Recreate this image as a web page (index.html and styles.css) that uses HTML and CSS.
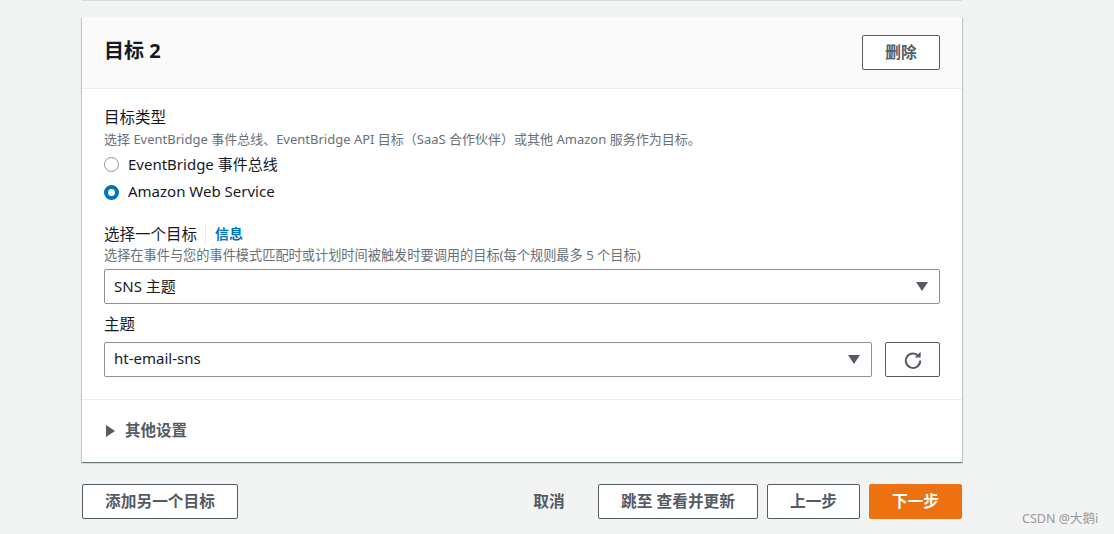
FILE: index.html
```html
<!DOCTYPE html>
<html lang="zh-CN">

<head>
    <meta charset="UTF-8">
    <meta name="viewport" content="width=device-width, initial-scale=1.0">
    <title>目标 2</title>
    <link rel="stylesheet" href="styles.css">
</head>

<body>
    <main class="side">
        <div class="forrige"></div>

        <section class="kort">
            <header class="kort-top">
                <h2>目标 2</h2>
                <button class="knap slet">删除</button>
            </header>

            <div class="kort-indhold">
                <div class="felt-titel">目标类型</div>
                <p class="hint hint-top">选择 EventBridge 事件总线、EventBridge API 目标（SaaS 合作伙伴）或其他 Amazon 服务作为目标。</p>

                <div class="radio-linje">
                    <span class="radio"></span>
                    <span class="radio-tekst">EventBridge 事件总线</span>
                </div>
                <div class="radio-linje">
                    <span class="radio valgt"></span>
                    <span class="radio-tekst">Amazon Web Service</span>
                </div>

                <div class="felt-titel med-info">
                    <span>选择一个目标</span>
                    <a class="info" href="#">信息</a>
                </div>
                <p class="hint hint-luft">选择在事件与您的事件模式匹配时或计划时间被触发时要调用的目标(每个规则最多 5 个目标)</p>
                <div class="vaelger">
                    <span>SNS 主题</span>
                    <span class="pil"></span>
                </div>

                <div class="felt-titel tema">主题</div>
                <div class="raekke">
                    <div class="vaelger">
                        <span>ht-email-sns</span>
                        <span class="pil"></span>
                    </div>
                    <button class="knap opdater" aria-label="刷新">
                        <svg width="18" height="18" viewBox="0 0 18 18" fill="none">
                            <path d="M14.6 5.2A7.2 7.2 0 1 0 16.2 9.6" stroke="#545b64" stroke-width="2"/>
                            <path d="M10.6 6.6H16.6V0.8Z" fill="#545b64"/>
                        </svg>
                    </button>
                </div>
            </div>

            <div class="kort-bund">
                <span class="trekant"></span>
                <span>其他设置</span>
            </div>
        </section>

        <footer class="handlinger">
            <button class="knap tilfoej">添加另一个目标</button>
            <div class="hoejre">
                <button class="knap flad">取消</button>
                <button class="knap spring">跳至 查看并更新</button>
                <button class="knap forrige-trin">上一步</button>
                <button class="knap naeste">下一步</button>
            </div>
        </footer>
    </main>

    <div class="vandmaerke">CSDN @大鹅i</div>
</body>

</html>
```

FILE: styles.css
```css
html {
    height: 100%;
}

body {
    margin: 0;
    height: 534px;
    overflow: hidden;
    background-color: #f2f3f3;
    color: #16191f;
    font-family: "Noto Sans", "Noto Sans CJK SC", sans-serif;
    font-size: 15px;
}

.side {
    width: 880px;
    margin-left: 82px;
}

.forrige {
    height: 1px;
    background-color: #d5dbdb;
    margin-bottom: 16px;
}

.kort {
    background-color: #fff;
    box-shadow: 0 1px 1px 0 rgba(0, 28, 36, 0.4), 1px 1px 1px 0 rgba(0, 28, 36, 0.15), -1px 1px 1px 0 rgba(0, 28, 36, 0.15);
}

.kort-top {
    display: flex;
    justify-content: space-between;
    align-items: center;
    height: 71px;
    padding: 0 22px;
    background-color: #fafafa;
    border-bottom: 1px solid #eaeded;
}

.kort-top h2 {
    margin: 0 0 3px 0;
    font-size: 20px;
    line-height: 24px;
    font-weight: 700;
}

.kort-indhold {
    padding: 18px 22px 22px 22px;
    border-bottom: 1px solid #eaeded;
}

.felt-titel {
    font-size: 15.5px;
    line-height: 20px;
    padding-bottom: 1px;
}

.hint {
    margin: 0;
    font-size: 13px;
    line-height: 22px;
    color: #687078;
}

.hint-luft {
    font-size: 13.2px;
    line-height: 21px;
    margin-bottom: 3px;
}

.radio-linje {
    display: flex;
    align-items: center;
    gap: 9px;
    height: 28px;
}

.radio-tekst {
    padding-bottom: 2px;
}

.radio {
    box-sizing: border-box;
    width: 15px;
    height: 15px;
    border: 1.5px solid #8d9696;
    border-radius: 50%;
    background-color: #fff;
}

.radio.valgt {
    border: 4px solid #0073bb;
}

.med-info {
    display: flex;
    align-items: center;
    margin-top: 18px;
}

.info {
    margin-left: 8px;
    padding-left: 9px;
    border-left: 1px solid #eaeded;
    color: #0073bb;
    font-size: 14px;
    font-weight: 700;
    text-decoration: none;
}

.vaelger {
    box-sizing: border-box;
    display: flex;
    justify-content: space-between;
    align-items: center;
    flex: 1;
    height: 35px;
    padding: 0 11px 3px 9px;
    background-color: #fff;
    border: 1px solid #879596;
    border-radius: 2px;
}

.pil {
    width: 0;
    height: 0;
    margin-top: 3px;
    border-left: 6px solid transparent;
    border-right: 6px solid transparent;
    border-top: 9px solid #545b64;
}

.tema {
    margin-top: 10px;
    margin-bottom: 7px;
}

.raekke {
    display: flex;
    gap: 13px;
}

.knap {
    box-sizing: border-box;
    height: 35px;
    padding: 0 0 3px 0;
    background-color: #fff;
    border: 1px solid #545b64;
    border-radius: 2px;
    color: #545b64;
    font-family: inherit;
    font-size: 15.7px;
    font-weight: 700;
}

.slet {
    width: 78px;
}

.opdater {
    display: flex;
    justify-content: center;
    align-items: center;
    width: 55px;
    padding: 0;
}

.kort-bund {
    box-sizing: border-box;
    display: flex;
    align-items: center;
    gap: 10px;
    height: 62px;
    padding: 0 0 4px 24px;
    color: #545b64;
    font-size: 15.5px;
    font-weight: 700;
}

.trekant {
    width: 0;
    height: 0;
    margin-top: 3px;
    border-top: 6px solid transparent;
    border-bottom: 6px solid transparent;
    border-left: 9px solid #545b64;
}

.handlinger {
    display: flex;
    justify-content: space-between;
    margin-top: 22px;
}

.tilfoej {
    width: 156px;
}

.hoejre {
    display: flex;
    gap: 9px;
}

.flad {
    width: 64px;
    margin-right: 8px;
    background: none;
    border: none;
}

.spring {
    width: 160px;
}

.forrige-trin {
    width: 93px;
}

.naeste {
    width: 93px;
    background-color: #ec7211;
    border-color: #ec7211;
    color: #fff;
}

.vandmaerke {
    position: absolute;
    left: 1022px;
    top: 510px;
    font-size: 12.5px;
    line-height: 18px;
    color: #999;
}
```
